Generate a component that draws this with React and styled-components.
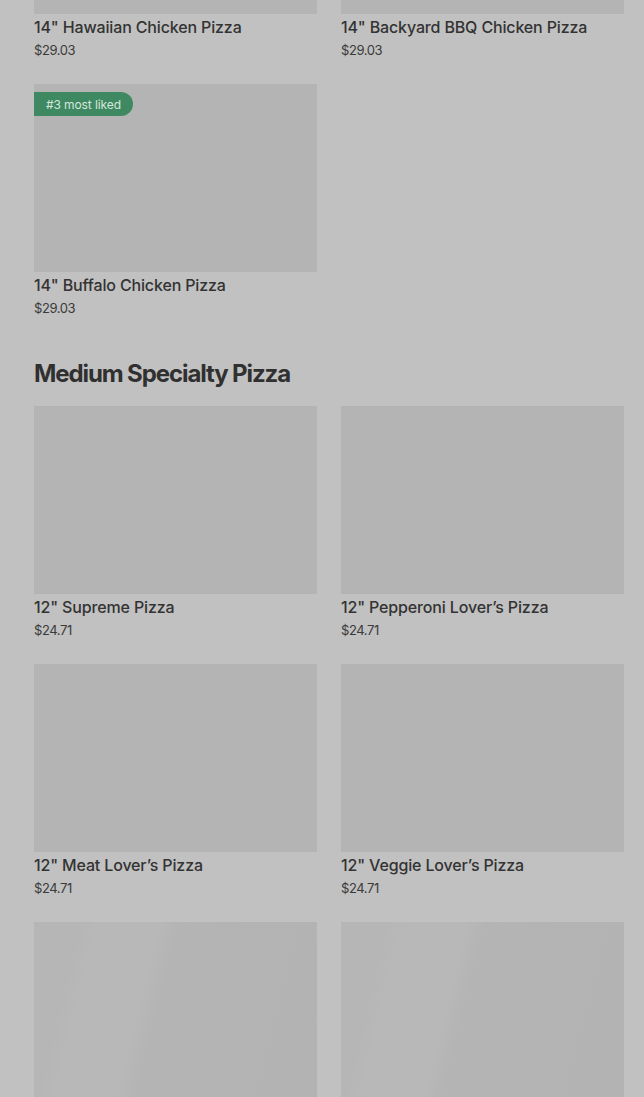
import React from "react";
import styled, { createGlobalStyle } from "styled-components";

const Global = createGlobalStyle`
  html, body { margin: 0; padding: 0; background: #c1c1c1; overflow: hidden; }
  body { font-family: Inter, "Noto Sans", Arial, sans-serif; }
`;

const Page = styled.div`
  margin-top: -174px;
  padding: 0 20px 0 34px;
`;

const Grid = styled.div`
  display: grid;
  grid-template-columns: 283px 283px;
  column-gap: 24px;
  row-gap: 24px;
`;

const Card = styled.div`
  display: flex;
  flex-direction: column;
`;

const Thumb = styled.div`
  position: relative;
  height: 188px;
  background: ${(p) =>
    p.$shimmer
      ? "linear-gradient(104deg, #b6b6b6 0%, #b6b6b6 14%, #b8b8b8 20%, #b8b8b8 38%, #b4b4b4 44%, #b3b3b3 100%)"
      : "#b4b4b4"};
`;

const Badge = styled.span`
  position: absolute;
  left: 0;
  top: 8px;
  height: 24px;
  padding: 0 12px 0 12px;
  display: flex;
  align-items: center;
  background: #3e8961;
  color: #d6e6dc;
  font-size: 12px;
  border-radius: 0 12px 12px 0;
  letter-spacing: -0.1px;
`;

const Name = styled.div`
  margin-top: 2px;
  font-size: 16px;
  line-height: 22px;
  color: #333333;
  font-weight: 500;
  letter-spacing: -0.15px;
`;

const Price = styled.div`
  margin-top: 2px;
  font-size: 13px;
  line-height: 20px;
  color: #3a3a3a;
  letter-spacing: -0.4px;
`;

const Heading = styled.h2`
  margin: 40px 0 16px;
  font-size: 24px;
  line-height: 32px;
  font-weight: 700;
  color: #303030;
  letter-spacing: -1.1px;
`;

const top = [
  { name: '14" Hawaiian Chicken Pizza', price: "$29.03" },
  { name: '14" Backyard BBQ Chicken Pizza', price: "$29.03" },
  { name: '14" Buffalo Chicken Pizza', price: "$29.03", badge: "#3 most liked" },
];

const medium = [
  { name: '12" Supreme Pizza', price: "$24.71" },
  { name: '12" Pepperoni Lover\u2019s Pizza', price: "$24.71" },
  { name: '12" Meat Lover\u2019s Pizza', price: "$24.71" },
  { name: '12" Veggie Lover\u2019s Pizza', price: "$24.71" },
  { shimmer: true },
  { shimmer: true },
];

function Item({ item }) {
  return (
    <Card>
      <Thumb $shimmer={item.shimmer}>{item.badge && <Badge>{item.badge}</Badge>}</Thumb>
      {item.name && <Name>{item.name}</Name>}
      {item.price && <Price>{item.price}</Price>}
    </Card>
  );
}

export default function App() {
  return (
    <>
      <Global />
      <Page>
        <Grid>
          {top.map((it, i) => (
            <Item key={i} item={it} />
          ))}
        </Grid>
        <Heading>Medium Specialty Pizza</Heading>
        <Grid>
          {medium.map((it, i) => (
            <Item key={i} item={it} />
          ))}
        </Grid>
      </Page>
    </>
  );
}
